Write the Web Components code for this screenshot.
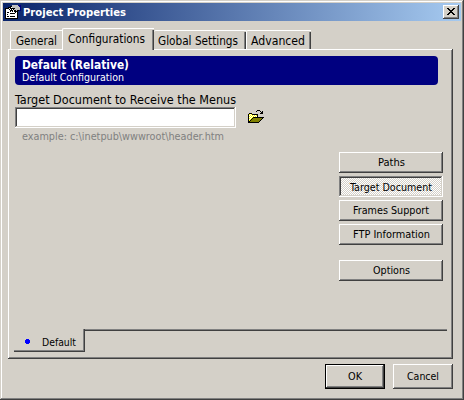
<!DOCTYPE html>
<html lang="en"><head><meta charset="utf-8"><title>Project Properties</title>
<style>html,body{margin:0;width:464px;height:400px;overflow:hidden;background:#d4d0c8;font-family:"DejaVu Sans Condensed","DejaVu Sans",sans-serif;color:#000}</style></head>
<body><project-dialog></project-dialog>
<script>
function define(name, html, setup) {
  const t = document.createElement('template'); t.innerHTML = html;
  customElements.define(name, class extends HTMLElement {
    connectedCallback() {
      if (this.shadowRoot) return;
      this.attachShadow({mode:'open'}).append(t.content.cloneNode(true));
      if (setup) setup(this, this.shadowRoot);
    }
  });
}
// One line of text set to an exact width; attributes: w (width), size, bold
define('fit-text', `<style>:host{display:block;flex:none;height:12px}svg{display:block;overflow:visible}text{fill:currentColor}</style><svg height="12"><text x="0" y="10" lengthAdjust="spacingAndGlyphs"></text></svg>`, (el, root) => {
  const s = root.querySelector('svg'), t = root.querySelector('text'), w = el.getAttribute('w');
  s.setAttribute('width', w); t.setAttribute('textLength', w); el.style.width = w + 'px';
  t.style.fontSize = (el.getAttribute('size') || 11) + 'px';
  if (el.hasAttribute('bold')) t.style.fontWeight = 'bold';
  t.textContent = el.textContent;
});
define('push-button', `<style>
:host{display:flex;box-sizing:border-box;width:104px;height:21px;justify-content:center;padding-top:4px;background:#d4d0c8;box-shadow:inset -1px -1px #404040,inset 1px 1px #fff,inset -2px -2px #808080}
:host([pressed]){padding-top:5px;background:repeating-conic-gradient(#fff 0 25%,#d4d0c8 0 50%) 0 0/2px 2px;box-shadow:inset -1px -1px #fff,inset 1px 1px #808080,inset -2px -2px #d4d0c8,inset 2px 2px #404040}
:host([large]){width:60px;height:25px;padding-top:6px}
:host([primary]){border:1px solid #000;padding-top:5px}
:host([close]){width:16px;height:14px;padding:0}
</style><slot></slot>`);
define('title-bar', `<style>
:host{display:flex;height:18px;background:linear-gradient(90deg,#0a246a,#a6caf0);color:#fff;box-sizing:border-box;padding:2px 2px 0 2px}
svg{display:block;flex:none} .icon{margin-right:2px} fit-text{margin-top:1px} push-button{margin-left:auto}
</style>
<svg class="icon" width="16" height="16" shape-rendering="crispEdges">
<path fill="#000080" d="M13 0h3v6h-3z"/>
<path fill="#000" d="M0 3h13v11H0z"/><path fill="#fff" d="M1 4h11v9H1z"/>
<path fill="#000" d="M2 7h2v1H2zM5 8h5v1H5zM2 9h1v1H2zM2 11h2v1H2zM5 11h5v1H5z"/>
<path fill="#000" d="M3 2h2v-1h2v-1h2v4h5v2h-2v1h-1v1h-1v-1h-1v-1h-1v1h-1v-1h-1v1h-1v-2h-1v-1h-1z"/>
<path fill="#c0c0c0" d="M7 0h6v1h1v1h1v3h-4v-1h-1v-1h-3zM9 4h2v1h1v1h-1v-1h-2z"/>
<path fill="#fff" d="M4 3h1v1H4zM6 2h1v1H6zM5 4h1v1H5zM7 4h1v1H7zM8 5h1v1H8z"/>
</svg><fit-text w="103" bold>Project Properties</fit-text>
<push-button close><svg width="16" height="14" shape-rendering="crispEdges"><path d="M4 3h2v1h1v1h2v-1h1v-1h2v1h-1v1h-1v1h-1v1h1v1h1v1h1v1h-2v-1h-1v-1h-2v1h-1v1h-2v-1h1v-1h1v-1h1v-1h-1v-1h-1v-1h-1z"/></svg></push-button>`);
define('page-tab', `<style>
:host{display:block;box-sizing:border-box;height:19px;padding:4px 0 0 5px;border-top:1px solid #fff;border-left:1px solid #fff;border-top-left-radius:2px;position:relative}
:host::after{content:"";position:absolute;right:0;top:1px;bottom:0;width:1px;background:#404040;border-left:1px solid #808080}
:host([active]){height:22px;background:#d4d0c8;margin-bottom:-1px}
:host([first])::after{display:none}
</style><slot></slot>`);
define('config-banner', `<style>
:host{display:block;box-sizing:border-box;width:423px;height:29px;background:#000080;color:#fff;border-radius:4px;padding:3px 7px}
</style><fit-text w="107" size="12.4" bold>Default (Relative)</fit-text><fit-text w="102">Default Configuration</fit-text>`);
define('path-field', `<style>
:host{display:grid;width:260px;grid-template-columns:221px 1fr}
.label,.hint{grid-column:1/3}.label{height:13px;padding-top:0}
.box{height:21px;background:#fff;box-shadow:inset -1px -1px #fff,inset 1px 1px #808080,inset -2px -2px #d4d0c8,inset 2px 2px #404040}
.hint{color:#808080;padding:2px 0 0 7px}
svg{margin:2px 0 0 12px}
</style>
<div class="label"><fit-text w="221" size="12">Target Document to Receive the Menus</fit-text></div>
<div class="box"></div>
<svg width="17" height="15" shape-rendering="crispEdges">
<path fill="#000" d="M0 5h1v-1h3v1h6v3h6v1h-1v1h-1v1h-1v1h-1v1h-1v1H0z"/>
<path fill="#ff0" d="M1 5h3v1h5v2H5v1H4v1H3v1H2v1H1z"/>
<path fill="#fff" d="M2 5h1v1H2zM1 6h1v1H1zM3 6h1v1H3zM5 6h1v1H5zM7 6h1v1H7zM2 7h1v1H2zM4 7h1v1H4zM6 7h1v1H6zM8 7h1v1H8zM1 8h1v1H1zM3 8h1v1H3zM2 9h1v1H2zM1 10h1v1H1z"/>
<path fill="#808000" d="M5 9h9v1h-1v1h-1v1h-1v1H2v-1h1v-1h1v-1h1z"/>
<path fill="#000" d="M8 2h1v1H8zM9 1h3v1H9zM12 2h1v1h-1zM14 2h1v3h-3v-1h1v-1h1z"/>
</svg>
<div class="hint"><fit-text w="202">example: c:\\inetpub\\wwwroot\\header.htm</fit-text></div>`);
define('button-stack', `<style>:host{display:flex;flex-direction:column;gap:3px;width:104px}.last{margin-top:12px}</style>
<push-button><fit-text w="27">Paths</fit-text></push-button>
<push-button pressed><fit-text w="82">Target Document</fit-text></push-button>
<push-button><fit-text w="76">Frames Support</fit-text></push-button>
<push-button><fit-text w="77">FTP Information</fit-text></push-button>
<push-button class="last"><fit-text w="37">Options</fit-text></push-button>`);
define('sheet-tabs', `<style>
:host{display:flex;width:433px;height:23px}
.tab{display:flex;box-sizing:border-box;width:71px;height:23px;padding:7px 0 0 11px;box-shadow:inset -1px -1px #404040,inset -2px -2px #808080}
.rest{flex:1;height:1px;border-top:1px solid #808080;background:#404040}
svg{margin:3px 12px 0 0}
</style><div class="tab"><svg width="5" height="5" shape-rendering="crispEdges"><path fill="#00f" d="M1 0h3v1h1v3h-1v1h-3v-1h-1v-3h1z"/></svg><fit-text w="34">Default</fit-text></div><div class="rest"></div>`);
define('tab-panel', `<style>
:host{display:flex;flex-direction:column;box-sizing:border-box;width:445px;height:310px;padding:7px 6px 7px 7px;box-shadow:inset -1px -1px #404040,inset 1px 1px #fff,inset -2px -2px #808080}
path-field{margin-top:9px}button-stack{align-self:flex-end;margin:10px 4px 0 0}sheet-tabs{margin:auto 0 0 -1px}
</style><config-banner></config-banner><path-field></path-field><button-stack></button-stack><sheet-tabs></sheet-tabs>`);
define('project-dialog', `<style>
:host{display:block;box-sizing:border-box;width:464px;height:400px;padding:3px;background:#d4d0c8;box-shadow:inset -1px -1px #404040,inset 1px 1px #d4d0c8,inset -2px -2px #808080,inset 2px 2px #fff}
.tabs{display:flex;align-items:flex-end;height:28px;padding-left:7px}
.tabs page-tab{position:relative;z-index:1}
tab-panel{margin-left:5px}
footer{display:flex;justify-content:flex-end;gap:8px;padding:5px 8px 0 0}
</style>
<title-bar></title-bar>
<div class="tabs">
<page-tab first style="width:52px"><fit-text w="41" size="11.8">General</fit-text></page-tab>
<page-tab active style="width:92px"><fit-text w="77" size="11.8">Configurations</fit-text></page-tab>
<page-tab style="width:92px;border-left:0;padding-left:4px"><fit-text w="80" size="11.8">Global Settings</fit-text></page-tab>
<page-tab style="width:65px;padding-left:4px"><fit-text w="54" size="11.8">Advanced</fit-text></page-tab>
</div>
<tab-panel></tab-panel>
<footer><push-button large primary><fit-text w="14">OK</fit-text></push-button><push-button large><fit-text w="32">Cancel</fit-text></push-button></footer>`);
</script></body></html>
